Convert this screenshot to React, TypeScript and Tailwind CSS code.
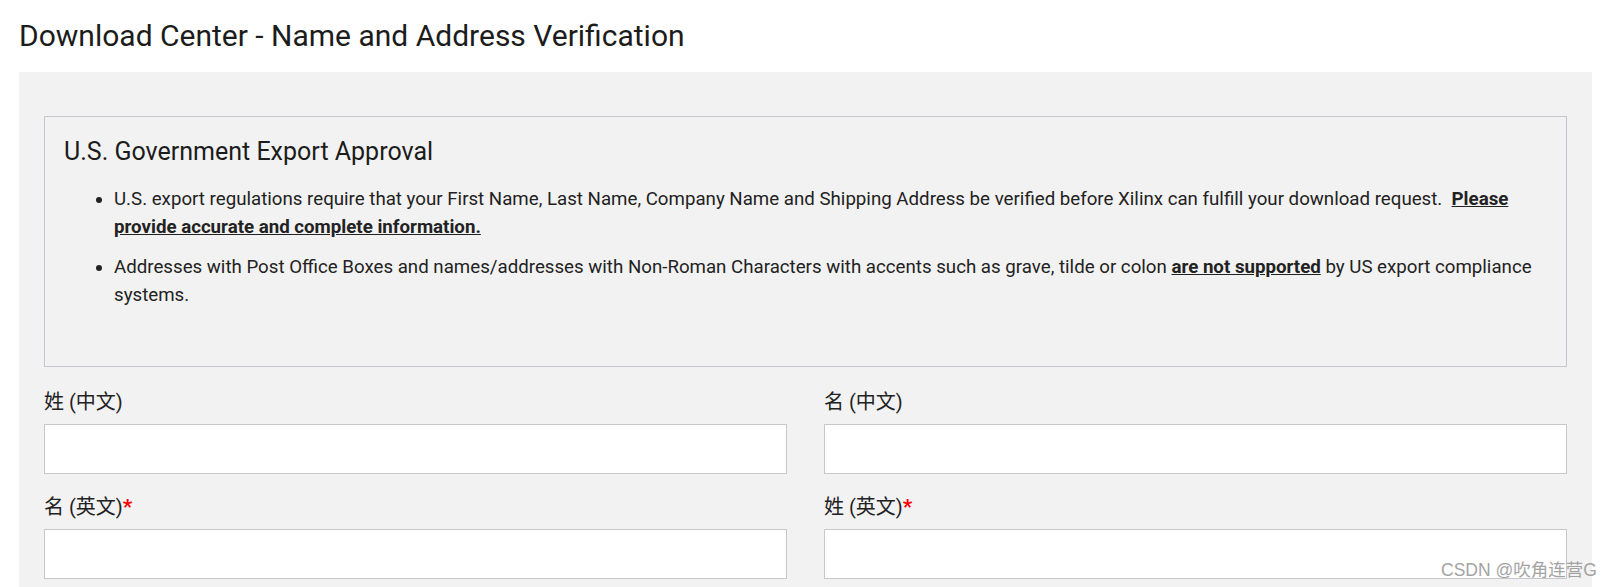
import React from 'react'

const font = { fontFamily: 'Roboto, "Noto Sans CJK SC", sans-serif' }

function Field({ label, required }: { label: string; required?: boolean }) {
  return (
    <div className="flex flex-col">
      <label className="text-[20px] leading-[24px] text-[#222] h-[24px] whitespace-nowrap">
        {label}
        {required && <span className="text-[#f00] font-bold text-[21px]">*</span>}
      </label>
      <input className="mt-[10px] h-[50px] w-full border border-[#c8c8cc] bg-white outline-none" />
    </div>
  )
}

export default function App() {
  return (
    <div className="relative min-h-screen bg-white text-[#222]" style={font}>
      <h1 className="pl-[19px] pt-[16px] text-[30px] leading-[40px] font-normal text-[#1c1c1c]">
        Download Center - Name and Address Verification
      </h1>

      <div className="ml-[19px] mr-[21px] mt-[16px] bg-[#f2f2f2] px-[25px] pt-[44px] pb-[40px]">
        {/* export notice */}
        <div className="h-[251px] border border-[#c6c6cc] pl-[19px] pr-[20px] pt-[20px]">
          <h2 className="text-[25px] leading-[30px] font-normal text-[#1c1c1c]">U.S. Government Export Approval</h2>
          <ul className="mt-[18px] list-disc pl-[50px] text-[18.7px] leading-[28px] text-[#222]">
            <li>
              U.S. export regulations require that your First Name, Last Name, Company Name and Shipping Address be verified before Xilinx can fulfill your download request.&nbsp;{' '}
              <b className="underline">Please provide accurate and complete information.</b>
            </li>
            <li className="mt-[12px]">
              Addresses with Post Office Boxes and names/addresses with Non-Roman Characters with accents such as grave, tilde or colon{' '}
              <b className="underline">are not supported</b> by US export compliance systems.
            </li>
          </ul>
        </div>

        <div className="mt-[23px] grid grid-cols-2 gap-x-[37px] gap-y-[21px]">
          <Field label="姓 (中文)" />
          <Field label="名 (中文)" />
          <Field label="名 (英文)" required />
          <Field label="姓 (英文)" required />
        </div>
      </div>

      <div
        className="pointer-events-none absolute left-[1441px] top-[558px] text-[17.5px] leading-[24px] text-[#9a9a9a] opacity-90"
        style={{ fontFamily: '"Liberation Sans", "Noto Sans CJK SC", sans-serif' }}
      >
        CSDN @吹角连营G
      </div>
    </div>
  )
}
